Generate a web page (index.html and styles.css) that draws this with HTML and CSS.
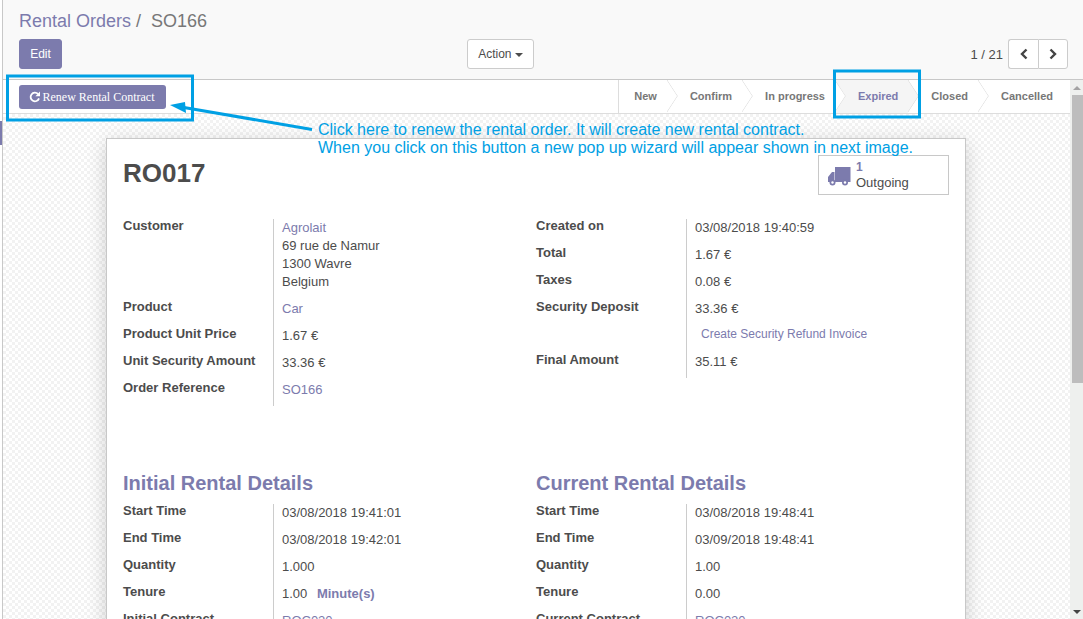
FILE: index.html
```html
<!DOCTYPE html>
<html lang="en">
<head>
    <meta charset="UTF-8">
    <title>Rental Orders / SO166</title>
    <link rel="stylesheet" href="styles.css">
</head>
<body>
    <div class="rail"><span class="rail-mark"></span></div>
    <div class="app">
        <div class="control-panel">
            <div class="breadcrumb"><a class="link">Rental Orders</a><span class="sep">/</span><span class="current">SO166</span></div>
            <div class="cp-row">
                <button class="btn btn-primary">Edit</button>
                <button class="btn btn-default">Action <span class="caret"></span></button>
                <div class="pager">
                    <span class="pager-value">1 / 21</span>
                    <div class="pager-btns">
                        <button class="pager-btn"><svg width="10" height="12" viewBox="0 0 10 12"><path d="M7.500 1.500 3 6l4.500 4.500" fill="none" stroke="#444" stroke-width="2.400"/></svg></button>
                        <button class="pager-btn"><svg width="10" height="12" viewBox="0 0 10 12"><path d="M2.500 1.500 7 6l-4.500 4.500" fill="none" stroke="#444" stroke-width="2.400"/></svg></button>
                    </div>
                </div>
            </div>
        </div>

        <div class="content">
            <div class="main">
                <div class="statusbar">
                    <button class="btn-renew">
                        <svg width="12" height="12" viewBox="0 0 12 12"><path d="M10 7.400A4.300 4.300 0 1 1 9 3" fill="none" stroke="#fff" stroke-width="1.800"/><path d="M11 .6v4.600H6.400z" fill="#fff"/></svg>
                        Renew Rental Contract
                    </button>
                    <div class="steps">
                        <span class="step step-first">New</span>
                        <span class="step">Confirm</span>
                        <span class="step">In progress</span>
                        <span class="step step-active">Expired</span>
                        <span class="step">Closed</span>
                        <span class="step step-last">Cancelled</span>
                    </div>
                </div>

                <div class="sheet-area">
                    <div class="sheet">
                        <div class="sheet-head">
                            <h1>RO017</h1>
                            <div class="stat-btn">
                                <svg width="24" height="21" viewBox="0 0 24 21"><path d="M8 2h15.500v15H8zM1 12 5 7h2.500v10H1z" fill="#7c7bad"/><circle cx="5.500" cy="17.500" r="3" fill="#7c7bad"/><circle cx="5.500" cy="17.500" r="1.200" fill="#fff"/><circle cx="18" cy="17.500" r="3" fill="#7c7bad"/><circle cx="18" cy="17.500" r="1.200" fill="#fff"/></svg>
                                <div class="stat-text"><b>1</b><span>Outgoing</span></div>
                            </div>
                        </div>

                        <div class="columns">
                            <div class="group">
                                <div class="label">Customer</div>
                                <div class="value"><a class="link">Agrolait</a><br>69 rue de Namur<br>1300 Wavre<br>Belgium</div>
                                <div class="label">Product</div>
                                <div class="value"><a class="link">Car</a></div>
                                <div class="label">Product Unit Price</div>
                                <div class="value">1.67 €</div>
                                <div class="label">Unit Security Amount</div>
                                <div class="value">33.36 €</div>
                                <div class="label">Order Reference</div>
                                <div class="value"><a class="link">SO166</a></div>
                            </div>
                            <div class="group">
                                <div class="label">Created on</div>
                                <div class="value">03/08/2018 19:40:59</div>
                                <div class="label">Total</div>
                                <div class="value">1.67 €</div>
                                <div class="label">Taxes</div>
                                <div class="value">0.08 €</div>
                                <div class="label">Security Deposit</div>
                                <div class="value">33.36 €</div>
                                <div class="label"></div>
                                <div class="value value-link"><a class="link">Create Security Refund Invoice</a></div>
                                <div class="label">Final Amount</div>
                                <div class="value">35.11 €</div>
                            </div>
                        </div>

                        <div class="columns columns-details">
                            <div>
                                <h2>Initial Rental Details</h2>
                                <div class="group">
                                    <div class="label">Start Time</div>
                                    <div class="value">03/08/2018 19:41:01</div>
                                    <div class="label">End Time</div>
                                    <div class="value">03/08/2018 19:42:01</div>
                                    <div class="label">Quantity</div>
                                    <div class="value">1.000</div>
                                    <div class="label">Tenure</div>
                                    <div class="value">1.00 <b class="unit">Minute(s)</b></div>
                                    <div class="label">Initial Contract</div>
                                    <div class="value"><a class="link">ROC020</a></div>
                                </div>
                            </div>
                            <div>
                                <h2>Current Rental Details</h2>
                                <div class="group">
                                    <div class="label">Start Time</div>
                                    <div class="value">03/08/2018 19:48:41</div>
                                    <div class="label">End Time</div>
                                    <div class="value">03/09/2018 19:48:41</div>
                                    <div class="label">Quantity</div>
                                    <div class="value">1.00</div>
                                    <div class="label">Tenure</div>
                                    <div class="value">0.00</div>
                                    <div class="label">Current Contract</div>
                                    <div class="value"><a class="link">ROC020</a></div>
                                </div>
                            </div>
                        </div>
                    </div>
                </div>
            </div>

            <div class="scrollbar">
                <span class="arrow-up"></span>
                <span class="thumb"></span>
                <span class="arrow-down"></span>
            </div>
        </div>
    </div>

    <!-- annotations drawn on top of the screenshot -->
    <svg class="marks" width="1083" height="619" viewBox="0 0 1083 619">
        <rect x="7.500" y="76" width="185" height="44" fill="none" stroke="#00a0e4" stroke-width="3"/>
        <rect x="834.500" y="71" width="85" height="46" fill="none" stroke="#00a0e4" stroke-width="3"/>
        <path d="M312 129.500 184 107.500" stroke="#00a0e4" stroke-width="3"/>
        <path d="M170 105 185 102 186 113z" fill="#00a0e4"/>
    </svg>
    <p class="note">Click here to renew the rental order. It will create new rental contract.<br>When you click on this button a new pop up wizard will appear shown in next image.</p>
</body>
</html>
```

FILE: styles.css
```css
html, body {
    height: 100%;
}

body {
    margin: 0;
    display: flex;
    overflow: hidden;
    position: relative;
    font-family: "Liberation Sans", Arial, sans-serif;
    font-size: 13px;
    color: #4c4c4c;
    background: #fff;
}

.rail {
    width: 2px;
    border-right: 1px solid #c8c8c8;
    padding-top: 121px;
    flex: none;
}

.rail-mark {
    display: block;
    height: 24px;
    background: #7c7bad;
}

.app {
    flex: 1;
    min-width: 0;
    display: flex;
    flex-direction: column;
}

.link {
    color: #7c7bad;
}

.control-panel {
    height: 80px;
    box-sizing: border-box;
    padding: 11px 15px 0 16px;
    background: #f9f9f9;
    border-bottom: 1px solid #c8c8c8;
    flex: none;
}

.breadcrumb {
    font-size: 18px;
    line-height: 20px;
}

.sep {
    margin: 0 10px 0 5px;
    color: #777;
}

.current {
    color: #777;
}

.cp-row {
    display: grid;
    grid-template-columns: 448px auto 1fr;
    align-items: center;
    margin-top: 8px;
}

.btn {
    height: 30px;
    font-family: "Liberation Sans", Arial, sans-serif;
    font-size: 12px;
    border-radius: 3px;
    padding: 0 10px;
}

.btn-primary {
    width: 43px;
    background: #7c7bad;
    border: 1px solid #7c7bad;
    color: #fff;
}

.btn-default {
    width: 67px;
    background: #fff;
    border: 1px solid #ccc;
    color: #4c4c4c;
}

.caret {
    display: inline-block;
    vertical-align: middle;
    border-top: 4px solid #4c4c4c;
    border-left: 4px solid transparent;
    border-right: 4px solid transparent;
}

.pager {
    display: flex;
    justify-content: flex-end;
    align-items: center;
    gap: 5px;
}

.pager-btns {
    display: flex;
}

.pager-btn {
    width: 30px;
    height: 30px;
    padding: 0;
    background: #fff;
    border: 1px solid #ccc;
    display: flex;
    align-items: center;
    justify-content: center;
}

.pager-btn:first-child {
    border-radius: 3px 0 0 3px;
    border-right: none;
}

.pager-btn:last-child {
    border-radius: 0 3px 3px 0;
}

.content {
    flex: 1;
    min-height: 0;
    display: flex;
}

.main {
    flex: 1;
    min-width: 0;
    display: flex;
    flex-direction: column;
}

.statusbar {
    height: 34px;
    box-sizing: border-box;
    flex: none;
    display: flex;
    justify-content: space-between;
    align-items: stretch;
    padding-left: 16px;
    border-bottom: 1px solid #ddd;
    background: #fff;
    overflow: hidden;
}

.btn-renew {
    align-self: flex-start;
    margin-top: 5px;
    width: 147px;
    height: 24px;
    padding: 0 2px 0 0;
    border: none;
    border-radius: 3px;
    background: #7c7bad;
    color: #fff;
    font-family: "Liberation Serif", serif;
    font-size: 12px;
    display: flex;
    align-items: center;
    justify-content: center;
    gap: 2px;
}

.steps {
    display: flex;
    border-left: 1px solid #ddd;
}

.step {
    position: relative;
    padding: 0 10px 0 23px;
    line-height: 33px;
    font-size: 11px;
    font-weight: bold;
    color: #777;
}

.step-first {
    padding-left: 15px;
}

.step-last {
    padding-right: 17px;
}

.step-last::after {
    display: none;
}

.step::after {
    content: "";
    position: absolute;
    z-index: 1;
    top: 4px;
    right: -12px;
    width: 23px;
    height: 23px;
    border-top: 1px solid #ddd;
    border-right: 1px solid #ddd;
    transform: scaleX(.65) rotate(45deg);
    clip-path: polygon(0 0, 100% 0, 100% 100%);
    background: #fff;
}

.step-active {
    background: #f5f5f5;
    color: #7c7bad;
}

.step-active::after {
    background: #f5f5f5;
}

.sheet-area {
    flex: 1;
    min-height: 0;
    padding-top: 24px;
    overflow: hidden;
    background: repeating-conic-gradient(#f2f2f2 0 25%, #fff 0 50%) 0 0 / 6px 6px;
}

.sheet {
    width: 860px;
    box-sizing: border-box;
    margin-left: 103px;
    padding: 16px 16px 40px;
    background: #fff;
    border: 1px solid #c8c8c8;
    box-shadow: 0 5px 20px -1px rgba(0,0,0,0.2);
}

.sheet-head {
    height: 64px;
    display: flex;
    justify-content: space-between;
    align-items: flex-start;
}

h1 {
    margin: 3px 0 0;
    font-size: 26px;
    line-height: 30px;
    font-weight: bold;
}

.stat-btn {
    width: 131px;
    height: 40px;
    box-sizing: border-box;
    border: 1px solid #c8c8c8;
    display: flex;
    align-items: center;
    gap: 5px;
    padding-left: 8px;
}

.stat-text {
    display: flex;
    flex-direction: column;
    line-height: 15px;
}

.stat-text b {
    color: #7c7bad;
    font-size: 12px;
}

.columns {
    display: grid;
    grid-template-columns: 413px 413px;
}

.columns-details {
    margin-top: 66px;
}

.group {
    display: grid;
    grid-template-columns: 150px 1fr;
    width: 400px;
    align-content: start;
}

.label {
    font-weight: bold;
    line-height: 18px;
    margin-top: -2px;
    padding-bottom: 11px;
}

.label:nth-last-child(2) {
    padding-bottom: 9px;
}

.value {
    border-left: 1px solid #ccc;
    padding: 0 0 9px 8px;
    line-height: 18px;
}

.value:last-child {
    padding-bottom: 7px;
}

.value-link {
    font-size: 12px;
    line-height: 14px;
    padding: 0 0 12px 14px;
}

.unit {
    color: #7c7bad;
    margin-left: 6px;
}

h2 {
    margin: 0 0 10px;
    color: #7c7bad;
    font-size: 20px;
    line-height: 22px;
    font-weight: bold;
}

.scrollbar {
    width: 13px;
    flex: none;
    position: relative;
    background: #eef0ee;
}

.thumb {
    position: absolute;
    top: 15px;
    left: 2px;
    width: 11px;
    height: 288px;
    background: #bdbdbd;
}

.arrow-up,
.arrow-down {
    position: absolute;
    left: 3px;
    border-left: 4px solid transparent;
    border-right: 4px solid transparent;
}

.arrow-up {
    top: 6px;
    border-bottom: 4px solid #a3a3a3;
}

.arrow-down {
    bottom: 5px;
    border-top: 4px solid #444;
}

.marks {
    position: absolute;
    left: 0;
    top: 0;
    z-index: 2;
    pointer-events: none;
}

.note {
    position: absolute;
    z-index: 3;
    left: 318px;
    top: 121px;
    margin: 0;
    font-size: 16px;
    line-height: 18px;
    color: #00a0e4;
}
```
